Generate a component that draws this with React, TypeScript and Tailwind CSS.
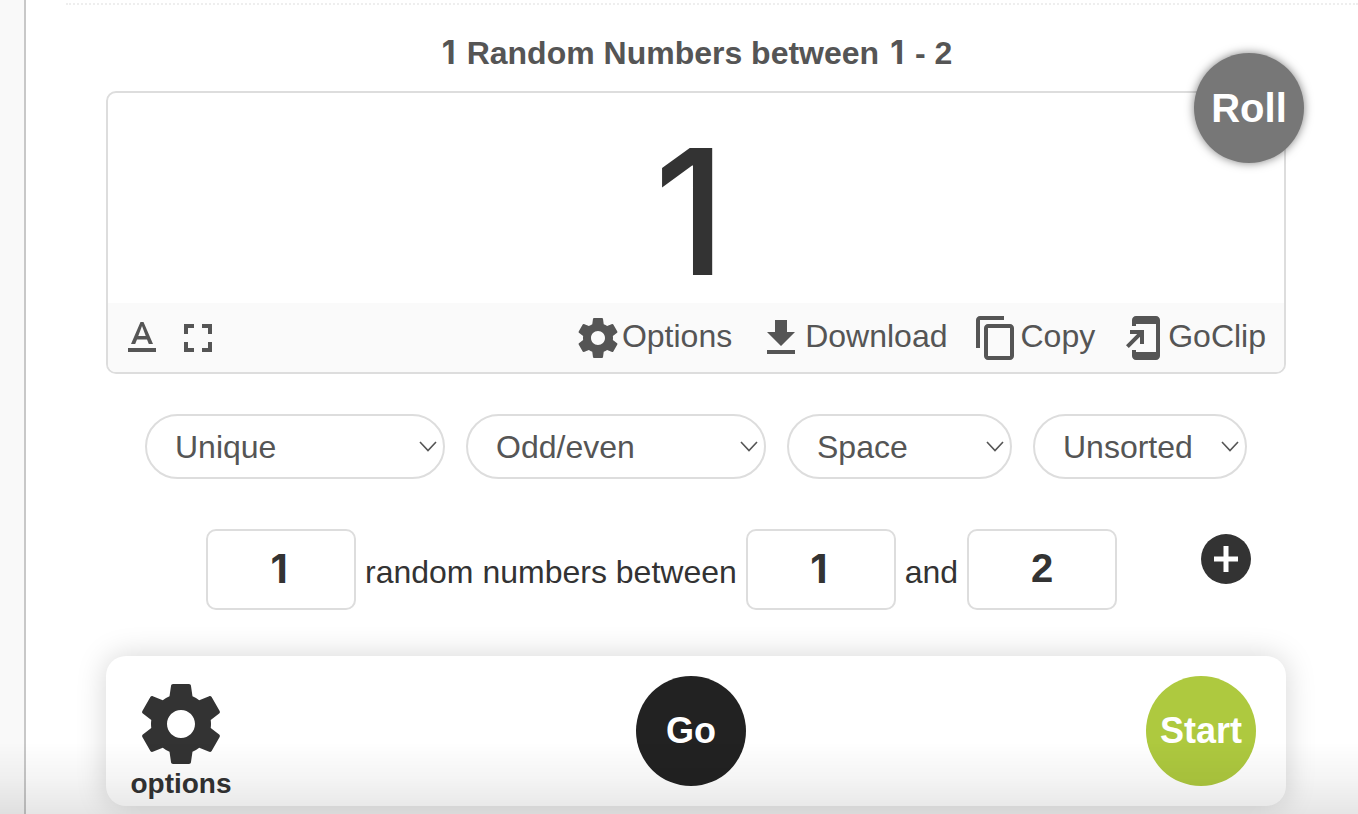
import React, { useState } from 'react';

const icons = {
  text: 'M5 17v2h14v-2H5zm4.5-4.2h5l.9 2.2h2.1L12.75 4h-1.5L6.5 15h2.1l.9-2.2zM12 5.98L13.87 11h-3.74L12 5.98z',
  fullscreen: 'M7 14H5v5h5v-2H7v-3zm-2-4h2V7h3V5H5v5zm12 7h-3v2h5v-5h-2v3zM14 5v2h3v3h2V5h-5z',
  settings:
    'M19.43 12.98c.04-.32.07-.64.07-.98s-.03-.66-.07-.98l2.11-1.65c.19-.15.24-.42.12-.64l-2-3.46c-.12-.22-.39-.3-.61-.22l-2.49 1c-.52-.4-1.08-.73-1.69-.98l-.38-2.65C14.46 2.18 14.25 2 14 2h-4c-.25 0-.46.18-.49.42l-.38 2.65c-.61.25-1.17.59-1.69.98l-2.49-1c-.23-.09-.49 0-.61.22l-2 3.46c-.13.22-.07.49.12.64l2.11 1.65c-.04.32-.07.65-.07.98s.03.66.07.98l-2.11 1.65c-.19.15-.24.42-.12.64l2 3.46c.12.22.39.3.61.22l2.49-1c.52.4 1.08.73 1.69.98l.38 2.65c.03.24.24.42.49.42h4c.25 0 .46-.18.49-.42l.38-2.65c.61-.25 1.17-.59 1.69-.98l2.49 1c.23.09.49 0 .61-.22l2-3.46c.12-.22.07-.49-.12-.64l-2.11-1.65zM12 15.5c-1.93 0-3.5-1.57-3.5-3.5s1.57-3.5 3.5-3.5 3.5 1.57 3.5 3.5-1.57 3.5-3.5 3.5z',
  download: 'M19 9h-4V3H9v6H5l7 7 7-7zM5 18v2h14v-2H5z',
  copy: 'M16 1H4c-1.1 0-2 .9-2 2v14h2V3h12V1zm3 4H8c-1.1 0-2 .9-2 2v14c0 1.1.9 2 2 2h11c1.1 0 2-.9 2-2V7c0-1.1-.9-2-2-2zm0 16H8V7h11v14z',
  goclip:
    'M18 1.01L8 1c-1.1 0-2 .9-2 2v3h2V5h10v14H8v-1H6v3c0 1.1.9 2 2 2h10c1.1 0 2-.9 2-2V3c0-1.1-.9-1.99-2-1.99zM10 15h2V8H5v2h3.59L3 15.59 4.41 17 10 11.41V15z',
};

type IconName = keyof typeof icons;

function Icon({ name, className = 'size-12' }: { name: IconName; className?: string }) {
  return (
    <svg viewBox="0 0 24 24" fill="currentColor" className={`shrink-0 ${className}`} aria-hidden="true">
      <path d={icons[name]} />
    </svg>
  );
}

function ToolButton({ icon, label }: { icon: IconName; label: string }) {
  return (
    <button type="button" className="flex items-center">
      <Icon name={icon} />
      <span className="pb-1">{label}</span>
    </button>
  );
}

function PillSelect({ label, options, width }: { label: string; options: string[]; width: string }) {
  return (
    <div className={`relative ${width}`}>
      <select
        aria-label={label}
        className="h-[65px] w-full appearance-none rounded-full border-2 border-[#ddd] bg-white pl-7 text-[32px] text-[#555]"
      >
        {options.map((option) => (
          <option key={option}>{option}</option>
        ))}
      </select>
      <svg
        viewBox="0 0 20 14"
        className="pointer-events-none absolute top-[26px] right-[7px] h-[14px] w-5"
        fill="none"
        stroke="#555"
        strokeWidth="1.6"
        aria-hidden="true"
      >
        <path d="M2 2l8 8.5 8-8.5" />
      </svg>
    </div>
  );
}

function NumberInput({ label, value, onChange }: { label: string; value: string; onChange: (v: string) => void }) {
  const font = value === '1' ? 'font-[Inter,sans-serif] pr-1' : "font-['Liberation_Sans',sans-serif]";
  return (
    <input
      type="text"
      inputMode="numeric"
      aria-label={label}
      value={value}
      onChange={(e) => onChange(e.target.value)}
      className={`h-[81px] w-[150px] rounded-[10px] border-2 border-[#ddd] bg-white pb-0.5 text-center text-[40px] font-bold text-[#333] ${font}`}
    />
  );
}

function One() {
  return <span className="inline-block w-[18px] text-center font-[Inter,sans-serif] leading-none">1</span>;
}

export default function App() {
  const [count, setCount] = useState('1');
  const [min, setMin] = useState('1');
  const [max, setMax] = useState('2');

  return (
    <div className="flex min-h-screen bg-white font-['Liberation_Sans',Arial,sans-serif] text-[#333]">
      <aside className="w-[26px] shrink-0 border-r-2 border-[#c8c8c8] bg-[#f9f9f9]" />

      <main className="min-w-0 flex-1 pt-[3px] pb-2">
        <div className="ml-10 border-t-2 border-dotted border-[#eee]" />

        <div className="mr-[72px] ml-20">
          <h1 className="mt-7 text-center text-[32px] leading-10 font-bold text-[#555]">
            <One /> Random Numbers between <One /> - 2
          </h1>

          <section className="relative mt-[18px] rounded-[10px] border-2 border-[#ddd]">
            <output className="flex h-[210px] items-center justify-center pt-7 pr-3 font-[Inter,sans-serif] text-[174px] leading-none font-medium">
              1
            </output>
            <div className="flex h-[69px] items-center justify-between rounded-b-lg bg-[#fafafa] pr-[18px] pl-[10px] text-[32px] text-[#555]">
              <div className="flex gap-2">
                <button type="button" aria-label="Text format">
                  <Icon name="text" />
                </button>
                <button type="button" aria-label="Fullscreen">
                  <Icon name="fullscreen" />
                </button>
              </div>
              <div className="flex gap-[25px]">
                <ToolButton icon="settings" label="Options" />
                <ToolButton icon="download" label="Download" />
                <ToolButton icon="copy" label="Copy" />
                <ToolButton icon="goclip" label="GoClip" />
              </div>
            </div>
            <button
              type="button"
              className="absolute -top-10 -right-5 size-[110px] rounded-full bg-[#777] text-[40px] font-bold text-white shadow-[0_0_10px_rgba(0,0,0,0.5)]"
            >
              Roll
            </button>
          </section>

          <div className="mt-10 flex justify-center gap-[21px]">
            <PillSelect label="Repeats" options={['Unique', 'Repeat']} width="w-[300px]" />
            <PillSelect label="Parity" options={['Odd/even', 'Odd', 'Even']} width="w-[300px]" />
            <PillSelect label="Separator" options={['Space', 'Comma', 'Line']} width="w-[225px]" />
            <PillSelect label="Order" options={['Unsorted', 'Sorted']} width="w-[214px]" />
          </div>

          <div className="mt-[50px] flex justify-between pr-[35px] pl-[100px]">
            <div className="flex items-center gap-[9px] text-[32px]">
              <NumberInput label="How many" value={count} onChange={setCount} />
              <span className="pt-1">random numbers between</span>
              <NumberInput label="From" value={min} onChange={setMin} />
              <span className="pt-1">and</span>
              <NumberInput label="To" value={max} onChange={setMax} />
            </div>
            <button
              type="button"
              aria-label="Add"
              className="mt-[5px] flex size-[50px] items-center justify-center rounded-full bg-[#333] text-white"
            >
              <svg viewBox="0 0 26 26" className="size-[26px]" fill="none" stroke="currentColor" strokeWidth="5">
                <path d="M13 0v26M1 13h24" />
              </svg>
            </button>
          </div>

          <footer className="mt-[46px] flex h-[150px] items-start justify-between rounded-[20px] bg-white pt-5 pr-[30px] pl-5 shadow-[0_0_30px_rgba(0,0,0,0.17)]">
            <button type="button" className="flex w-[110px] flex-col items-center text-[28px] leading-6 font-bold">
              <Icon name="settings" className="size-24" />
              options
            </button>
            <button type="button" className="size-[110px] rounded-full bg-[#222] text-[36px] font-bold text-white">
              Go
            </button>
            <button type="button" className="size-[110px] rounded-full bg-[#aec93f] text-[36px] font-bold text-white">
              Start
            </button>
          </footer>
        </div>
      </main>

      <div className="pointer-events-none fixed inset-x-0 bottom-0 h-[72px] bg-linear-to-t from-black/10 via-black/4 to-transparent" />
    </div>
  );
}
